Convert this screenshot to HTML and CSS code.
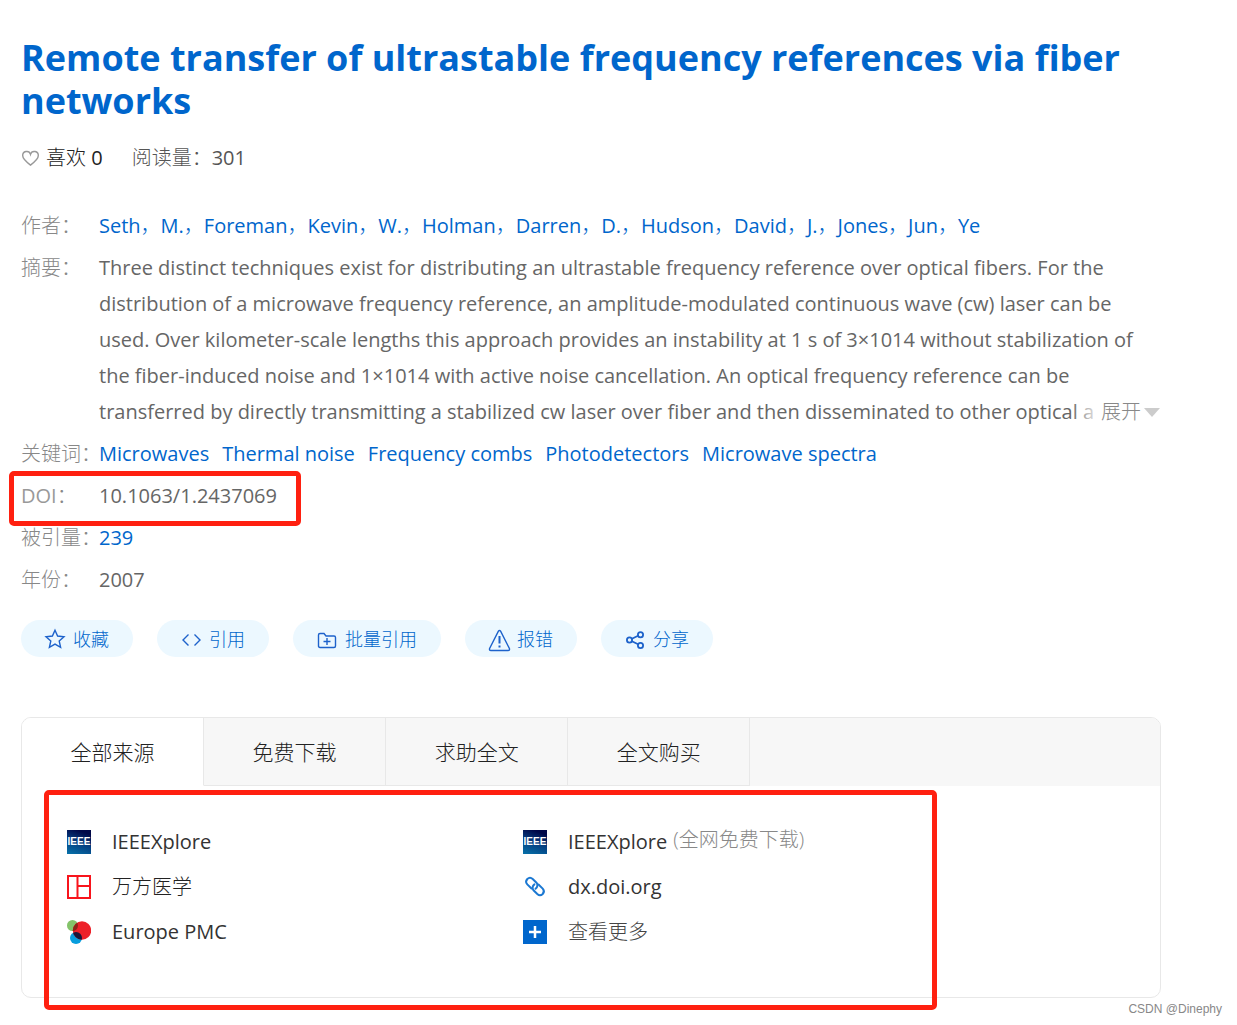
FILE: index.html
```html
<!DOCTYPE html>
<html lang="zh-CN">
<head>
<meta charset="utf-8">
<title>Remote transfer of ultrastable frequency references via fiber networks</title>
<link rel="stylesheet" href="styles.css">
</head>
<body>
<main class="page">
  <h1 class="title">Remote transfer of ultrastable frequency references via fiber networks</h1>
  <div class="stats">
    <button class="like" type="button">
      <svg class="heart" viewBox="0 0 20 20" aria-hidden="true"><path d="M10 17C5 13.2 1.8 10.600 1.800 7.200A4.200 4.200 0 0 1 10 5.600A4.200 4.200 0 0 1 18.200 7.200C18.200 10.600 15 13.200 10 17Z"/></svg>
      <span>喜欢 <span class="count">0</span></span>
    </button>
    <span class="reads">阅读量：<span class="count">301</span></span>
  </div>

  <dl class="details">
    <div class="row">
      <dt>作者：</dt>
      <dd class="authors"><a href="#">Seth</a>，<a href="#">M.</a>，<a href="#">Foreman</a>，<a href="#">Kevin</a>，<a href="#">W.</a>，<a href="#">Holman</a>，<a href="#">Darren</a>，<a href="#">D.</a>，<a href="#">Hudson</a>，<a href="#">David</a>，<a href="#">J.</a>，<a href="#">Jones</a>，<a href="#">Jun</a>，<a href="#">Ye</a></dd>
    </div>
    <div class="row">
      <dt>摘要：</dt>
      <dd class="abstract">Three distinct techniques exist for distributing an ultrastable frequency reference over optical fibers. For the<br>distribution of a microwave frequency reference, an amplitude-modulated continuous wave (cw) laser can be<br>used. Over kilometer-scale lengths this approach provides an instability at 1 s of 3×1014 without stabilization of<br>the fiber-induced noise and 1×1014 with active noise cancellation. An optical frequency reference can be<br>transferred by directly transmitting a stabilized cw laser over fiber and then disseminated to other optical a<button class="expand" type="button">展开<span class="caret"></span></button></dd>
    </div>
    <div class="row">
      <dt>关键词：</dt>
      <dd class="keywords"><a href="#">Microwaves</a><a href="#">Thermal noise</a><a href="#">Frequency combs</a><a href="#">Photodetectors</a><a href="#">Microwave spectra</a></dd>
    </div>
    <div class="row marked">
      <dt><span class="latin">DOI</span>：</dt>
      <dd>10.1063/1.2437069</dd>
    </div>
    <div class="row">
      <dt>被引量：</dt>
      <dd><a href="#">239</a></dd>
    </div>
    <div class="row">
      <dt>年份：</dt>
      <dd>2007</dd>
    </div>
  </dl>

  <div class="actions">
    <button type="button"><svg viewBox="0 0 20 20" aria-hidden="true"><path d="M10 1.200L12.600 7L19 7.700L14.200 12L15.600 18.300L10 15.100L4.400 18.300L5.800 12L1 7.700L7.400 7Z"/></svg>收藏</button>
    <button type="button"><svg viewBox="0 0 20 20" aria-hidden="true"><path d="M7.500 5.500L2 11L7.500 16.500M13.500 5.500L19 11L13.500 16.500"/></svg>引用</button>
    <button type="button"><svg viewBox="0 0 20 20" aria-hidden="true"><path d="M1.500 17V6Q1.500 4.500 3 4.500H7L9 7H17Q18.500 7 18.500 8.500V17Q18.500 18.500 17 18.500H3Q1.500 18.500 1.500 17ZM10 9V16M6.500 12.500H13.500"/></svg>批量引用</button>
    <button type="button"><svg viewBox="0 0 20 20" aria-hidden="true"><path d="M9.400 2.200Q10.500 .7 11.600 2.200L20.400 19.500Q21 21.500 19 21.500H2Q0 21.500 .6 19.500Z"/><path class="bold" d="M10.500 7V14.500M10.500 16.600V18.400"/></svg>报错</button>
    <button type="button"><svg class="share" viewBox="0 0 20 20" aria-hidden="true"><circle cx="4.500" cy="11" r="2.600"/><circle cx="15.500" cy="5.700" r="2.600"/><circle cx="15.500" cy="16.500" r="2.600"/><path d="M6.900 9.800L13.100 6.800M6.900 12.200L13.100 15.300"/></svg>分享</button>
  </div>

  <section class="sources">
    <div class="tabs" role="tablist">
      <button class="active" type="button" role="tab" aria-selected="true">全部来源</button>
      <button type="button" role="tab" aria-selected="false">免费下载</button>
      <button type="button" role="tab" aria-selected="false">求助全文</button>
      <button type="button" role="tab" aria-selected="false">全文购买</button>
    </div>
    <ul class="links">
      <li><span class="logo ieee">IEEE</span><a href="#">IEEEXplore</a></li>
      <li><span class="logo ieee">IEEE</span><a href="#">IEEEXplore</a><span class="note">(全网免费下载)</span></li>
      <li><svg class="logo" viewBox="0 0 24 24" aria-hidden="true"><rect width="24" height="24" fill="#f8141c"/><path fill="#fff" d="M2 2H9.500V22H2ZM11.500 2H22V10H11.500ZM11.500 12H22V22H11.500Z"/></svg><a class="light" href="#">万方医学</a></li>
      <li><svg class="logo" viewBox="0 0 24 24" aria-hidden="true"><g fill="none" stroke="#1b78d2" stroke-width="2" stroke-linecap="round"><path d="M8.500 13.500L4.300 9.400A4 4 0 0 1 4.300 4A4 4 0 0 1 9.700 4L13.500 7.700A4 4 0 0 1 12.600 13.600"/><path d="M15.500 9.500L19.700 13.600A4 4 0 0 1 19.700 19A4 4 0 0 1 14.300 19L10.500 15.300A4 4 0 0 1 11.400 9.400"/></g></svg><a href="#">dx.doi.org</a></li>
      <li><svg class="logo" viewBox="0 0 24 24" aria-hidden="true"><circle cx="5.500" cy="5.500" r="5.500" fill="#84c36a"/><circle cx="9" cy="18" r="6" fill="#079ddd"/><circle cx="15" cy="10.500" r="9.200" fill="#ed2129"/><clipPath id="red"><circle cx="15" cy="10.500" r="9.200"/></clipPath><g clip-path="url(#red)"><circle cx="5.500" cy="5.500" r="5.500" fill="#8c2518"/><circle cx="9" cy="18" r="6" fill="#1b1638"/></g></svg><a href="#">Europe PMC</a></li>
      <li><svg class="logo" viewBox="0 0 24 24" aria-hidden="true"><rect width="24" height="24" fill="#06c"/><path d="M12 6V18M6 12H18" stroke="#fff" stroke-width="2.500"/></svg><a class="light more" href="#">查看更多</a></li>
    </ul>
  </section>
  <div class="watermark">CSDN @Dinephy</div>
</main>
</body>
</html>
```
FILE: styles.css
```css
* { box-sizing: border-box; }
body {
  margin: 0;
  background: #fff;
  color: #666;
  font: 20px/36px "Open Sans", "Noto Sans CJK SC", sans-serif;
}
a { color: #06c; text-decoration: none; }
button { margin: 0; padding: 0; border: 0; background: none; color: inherit; font: inherit; cursor: pointer; }

.page { position: relative; padding: 36px 76px 27px 21px; }
.title { margin: 0; color: #06c; font-size: 36px; line-height: 43px; font-weight: 700; }

.stats { display: flex; gap: 29px; margin-top: 18px; font-weight: 300; }
.like { display: flex; align-items: center; gap: 6px; color: #222; }
.heart { width: 19px; height: 19px; fill: none; stroke: #999; stroke-width: 1.500; }
.count, .latin { font-weight: 400; }
.reads { color: #555; }

.details { display: flex; flex-direction: column; gap: 6px; margin: 32px 0 0; }
.row { display: flex; position: relative; }
dt { flex: 0 0 78px; min-width: 0; color: #888; white-space: nowrap; font-weight: 300; }
.latin { color: #999; }
dd { flex: 1; min-width: 0; margin: 0; }
.authors { color: #06c; font-weight: 300; }
.authors a { font-weight: 400; }
.abstract { position: relative; white-space: nowrap; }
.expand {
  position: absolute; right: 1px; bottom: 0;
  display: flex; align-items: center; gap: 3px;
  padding-left: 30px;
  background: linear-gradient(90deg, rgba(255,255,255,0), #fff 30px);
  color: #888; font-weight: 300; line-height: 36px;
}
.caret { border: 8px solid transparent; border-top: 9px solid #ccc; border-bottom: 0; }
.keywords { display: flex; gap: 13px; }
.marked::after, .sources::after {
  content: ""; box-sizing: border-box; position: absolute;
  border: 5px solid #ff2010; border-radius: 5px; pointer-events: none;
}
.marked::after { left: -12px; top: -7px; width: 292px; height: 55px; }

.actions { display: flex; gap: 24px; margin-top: 22px; }
.actions button {
  display: flex; align-items: center; gap: 8px;
  height: 37px; padding: 0 24px; border-radius: 19px;
  background: #ecf8ff; color: #06c; font-size: 18px; font-weight: 300;
}
.actions svg { width: 20px; height: 20px; overflow: visible; fill: none; stroke: #1d62cb; stroke-width: 1.400; }
.actions .bold { stroke-width: 2; }
.actions .share { stroke-width: 1.800; }

.sources { position: relative; margin-top: 60px; border: 1px solid #e8e8e8; border-radius: 10px; }
.sources::after { left: 22px; top: 72px; width: 893px; height: 220px; }
.tabs { display: flex; background: #f7f7f7; border-radius: 9px 9px 0 0; }
.tabs button {
  width: 16%; height: 68px;
  border-right: 1px solid #e8e8e8; border-bottom: 1px solid #e8e8e8;
  color: #222; font-size: 21px; font-weight: 300;
}
.tabs .active { background: #fff; border-bottom-color: #fff; border-radius: 9px 0 0 0; }
.links {
  display: grid; grid-template-columns: 456px 1fr;
  margin: 0; padding: 33px 45px 43px; list-style: none;
}
.links li { display: flex; align-items: center; height: 45px; }
.links a { color: #333; }
.links .light { color: #222; font-weight: 300; }
.links .more { color: #444; }
.logo { width: 24px; height: 24px; margin-right: 21px; }
.ieee {
  background: linear-gradient(20deg, #0672aa, #053b7e 50%, #000848 85%);
  color: #fff; font: 700 10px/24px "Liberation Sans", sans-serif; text-align: center;
}
.note { margin-left: 6px; padding-bottom: 4px; color: #888; font-weight: 300; }
.watermark { position: absolute; right: 15px; bottom: 6px; color: #888; font: 12px/20px "Liberation Sans", sans-serif; }
```
